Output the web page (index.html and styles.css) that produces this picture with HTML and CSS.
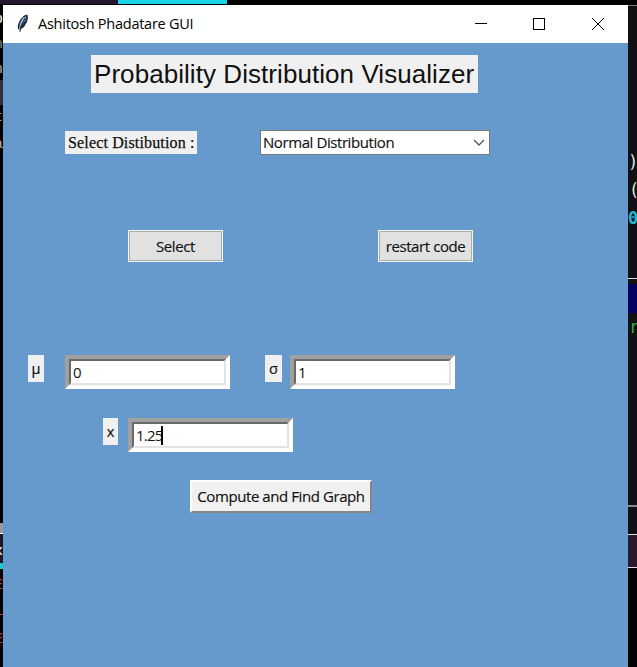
FILE: index.html
```
<!DOCTYPE html>
<html lang="en">
<head>
<meta charset="utf-8">
<title>Ashitosh Phadatare GUI</title>
<link rel="stylesheet" href="styles.css">
</head>
<body>
<div class="tabs"><span class="tab"></span><span class="tab active"></span></div>
<div class="desktop">
  <div class="edge left">
    <span class="g g1">p</span><span class="g g2">n</span><span class="g g3">n</span><span class="g g4"></span><span class="g g5">t</span><span class="g g6">a</span>
    <span class="panel"></span><span class="g g7">x</span><span class="cyan"></span>
    <span class="g g8">E</span><span class="g g9">i</span><span class="g g10">E</span>
  </div>
  <main class="window">
    <header class="titlebar">
      <svg class="feather" width="16" height="20" viewBox="0 0 16 20">
        <path d="M12.5.5 9 1.5 5 6 2.8 11 3 15l2 .8L9 13l3-5 1-4z" fill="#252b35"/>
        <path d="M11.5 2 8 4 5 9 4 13l2-1 4-5z" fill="#578abd"/>
        <path d="M11 3 6 9l-1.500 6M9 3.500 6 8" stroke="#a7c8e4" fill="none"/>
        <path d="M10 4 5.500 13 5 18" stroke="#27303a" fill="none"/>
      </svg>
      <span class="caption">Ashitosh Phadatare GUI</span>
      <svg class="controls" width="132" height="14" viewBox="0 0 132 14" fill="none" stroke="#000" shape-rendering="crispEdges">
        <path d="M0 6.500h12M58.500 1.500h11v11h-11z"/>
        <path d="m117 1 12 12m0-12-12 12" shape-rendering="auto"/>
      </svg>
    </header>
    <h1 class="heading">Probability Distribution Visualizer</h1>
    <div class="row choose">
      <label class="serif">Select Distibution :</label>
      <div class="combo"><span>Normal Distribution</span>
        <svg width="12" height="7" viewBox="0 0 12 7"><path d="m1 1 5 5 5-5" fill="none" stroke="#555" stroke-width="1.300"/></svg>
      </div>
    </div>
    <div class="row actions">
      <button class="btn select">Select</button>
      <button class="btn restart">restart code</button>
    </div>
    <div class="row params">
      <label class="tag mu">μ</label><div class="entry"><span class="inner">0</span></div>
      <label class="tag sigma">σ</label><div class="entry"><span class="inner">1</span></div>
    </div>
    <div class="row xrow">
      <label class="tag x">x</label><div class="entry"><span class="inner xval">1.25<i class="caret"></i></span></div>
    </div>
    <button class="compute">Compute and Find Graph</button>
  </main>
  <div class="edge right">
    <span class="r r1">)</span><span class="r r2">(</span><span class="r r3">0</span>
    <span class="rule"></span><span class="navy"></span><span class="r r4">r</span>
    <span class="rule gray"></span><span class="plum"></span><span class="black"></span>
  </div>
</div>
</body>
</html>
```
FILE: styles.css
```
* { box-sizing: border-box; }
body { margin: 0; width: 637px; height: 667px; overflow: hidden; background: #000; color: #111; font: 15px "Open Sans", "Noto Sans", sans-serif; }
.tabs { display: flex; height: 5px; }
.tab { width: 118px; height: 4px; background: #25182c; }
.tab.active { width: 109px; background: #18d5e8; }
.desktop { display: grid; grid-template-columns: 3px 625px 9px; height: 662px; }
.edge { display: flex; flex-direction: column; overflow: hidden; }
.edge span { flex: none; display: block; }
.window { background: #6699cc; min-width: 0; }
.titlebar { display: flex; align-items: center; height: 38px; background: #fff; color: #000; }
.feather { margin: -1px 0 0 12px; }
.caption { margin: -2px 0 0 7px; width: 170px; white-space: nowrap; font-size: 14.5px; letter-spacing: -.25px; }
.controls { margin-left: 267px; }
.heading { margin: 12px 0 0 88px; width: 387px; height: 38px; background: #f0f0f0; padding-left: 3px; font: 26px/39px "Liberation Sans", Arial, sans-serif; letter-spacing: .06px; white-space: nowrap; }
.row { display: flex; white-space: nowrap; }
.choose { margin-top: 37px; padding-left: 62px; }
.serif { margin-top: 1px; width: 132px; height: 23px; padding-left: 3px; background: #f0f0f0; font: 16px/23px "Liberation Serif", serif; letter-spacing: .15px; -webkit-text-stroke: .25px #111; }
.combo { display: flex; align-items: center; justify-content: space-between; margin-left: 63px; width: 230px; height: 25px; padding: 0 4px 0 2px; border: 1px solid #777; background: #fff; letter-spacing: -.42px; -webkit-text-stroke: .15px #111; }
.combo span { margin-top: -2px; }
.actions { margin-top: 75px; padding-left: 125px; gap: 155px; }
button { padding: 0; white-space: nowrap; color: #111; font: 15px "Open Sans", "Noto Sans", sans-serif; letter-spacing: -.42px; -webkit-text-stroke: .15px #111; }
.btn { width: 95px; height: 32px; border: 1px solid #f4f4f4; background: #e1e1e1; box-shadow: inset 0 0 0 1px #adadad; }
.params { margin-top: 93px; padding-left: 25px; }
.tag { flex: none; height: 27px; background: #f0f0f0; text-align: center; font-size: 14.5px; line-height: 28px; -webkit-text-stroke: .2px #111; }
.mu { width: 16px; margin-right: 21px; }
.sigma { width: 17px; margin: 0 8px 0 35px; }
.x { width: 15px; margin-right: 10px; }
.entry { flex: none; width: 165px; height: 34px; border: 4px solid; border-color: #a0a0a0 #fff #fff #a0a0a0; }
.inner { display: flex; align-items: center; height: 26px; border: 2px solid; border-color: #696969 #e3e3e3 #e3e3e3 #696969; background: #fff; padding-left: 2px; font-size: 15px; letter-spacing: -.8px; }
.caret { width: 2px; height: 19px; margin-left: -1px; background: #000; }
.xrow { margin-top: 29px; padding-left: 100px; }
.compute { display: block; margin: 28px 0 0 187px; width: 182px; height: 33px; padding-bottom: 2px; background: #f0f0f0; border: 2px solid; border-color: #fff #858585 #858585 #fff; }
.left .g { color: #aaa; font: 15px/20px "Liberation Mono", monospace; height: 20px; margin-left: -6px; }
.left .g1 { margin-top: 5px; color: #fff; }
.left .g2 { margin-top: 5px; color: #688; }
.left .g3 { margin-top: 5px; }
.left .g4 { height: 25px; margin: 0; background: #30303a; }
.left .g5 { margin-top: 3px; color: #c59a65; }
.left .g6 { margin-top: 7px; }
.left .panel { margin-top: 368px; height: 10px; background: #999; }
.left .g7 { height: 30px; line-height: 36px; color: #fff; background: #1d1729; border-top: 1px solid #fff; }
.left .cyan { height: 6px; background: #18cbd2; }
.left .g8 { margin-top: 7px; color: #b64850; }
.left .g9 { margin-top: 6px; color: #b64850; }
.left .g10 { margin-top: 8px; color: #b64850; }
.right { background: #111; border-top: 1px solid #777; }
.right .r { margin-left: 1px; height: 20px; font: 17px/20px "DejaVu Sans Mono", monospace; color: #ddd; }
.right .r1 { margin-top: 146px; margin-left: 0; }
.right .r2 { margin-top: 8px; }
.right .r3 { margin-top: 8px; color: #23b8d5; font-weight: bold; margin-left: 0; }
.right .rule { margin-top: 50px; height: 1px; background: #ddd; }
.right .navy { margin-top: 5px; height: 29px; background: #000060; }
.right .r4 { margin-top: 4px; color: #42a747; }
.right .gray { margin-top: 168px; height: 2px; background: #888; }
.right .plum { margin-top: 27px; height: 34px; border: solid #ddd; border-width: 1px 0; background: #29182f; }
.right .black { flex: 1; background: #000; }
```
